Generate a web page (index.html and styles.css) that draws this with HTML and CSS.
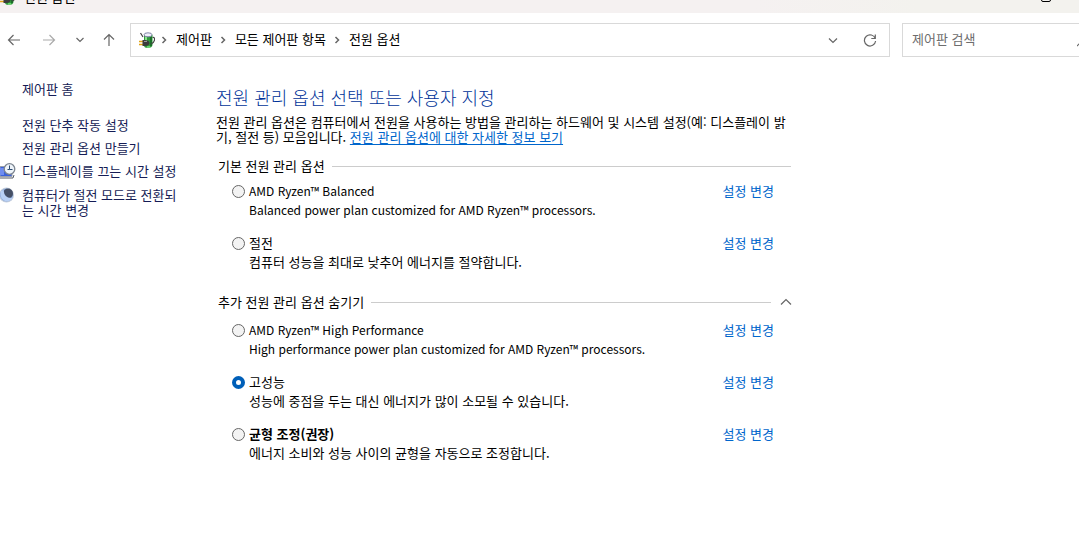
FILE: index.html
```html
<!DOCTYPE html>
<html lang="ko">
  <head>
    <meta charset="UTF-8" />
    <meta name="viewport" content="width=device-width, initial-scale=1.0" />
    <title>전원 옵션</title>
    <link rel="stylesheet" href="styles.css">
  </head>
  <body>
    <svg width="0" height="0" class="sprite" aria-hidden="true">
      <symbol id="power" viewBox="0 0 16 16">
        <path d="M5 4Q5 1 9 1t4.500 2.500v9.500Q13 16 9 16t-4-2.500z" fill="#2f9a3b" />
        <path d="M7 5v4" stroke="#8be08c" stroke-width="2" />
        <path d="M12 5v9" stroke="#166324" stroke-width="1.500" />
        <path d="M8 15h3" stroke="#7be07c" stroke-width="1.500" />
        <ellipse cx="9" cy="2.800" rx="4" ry="2" fill="#f0f0fa" stroke="#8486a8" />
        <path d="M1.500 1l2.500 4M13.500 5.500q2.500-.5 2 2.500t-3.500 4" fill="none" stroke="#444" stroke-width="1.200" />
        <path d="M0 9.500h4M0 12.500h4" stroke="#e0a416" stroke-width="1.600" />
        <path d="M3.500 8h3q4 .5 4 3t-4 3h-3z" fill="#3c3c3c" />
        <path d="M5 9.500h3" stroke="#999" />
      </symbol>
    </svg>
    <header class="titlebar">
      <svg class="icon-power"><use href="#power" /></svg>
      <span class="window-title">전원 옵션</span>
      <button class="maximize" aria-label="최대화"></button>
    </header>

    <nav class="toolbar">
      <button class="nav-btn" aria-label="뒤로">
        <svg width="14" height="14" viewBox="0 0 14 14"><path d="M13 7H1.500M6.500 2L1.500 7l5 5" /></svg>
      </button>
      <button class="nav-btn muted" aria-label="앞으로">
        <svg width="14" height="14" viewBox="0 0 14 14"><path d="M1 7h11.500M7.500 2l5 5-5 5" /></svg>
      </button>
      <button class="nav-btn recent" aria-label="최근 위치">
        <svg width="10" height="10" viewBox="0 0 10 10"><path d="M1.500 3L5 6.500 8.500 3" /></svg>
      </button>
      <button class="nav-btn up" aria-label="위로">
        <svg width="14" height="14" viewBox="0 0 14 14"><path d="M7 13V1.500M2 6.500l5-5 5 5" /></svg>
      </button>
      <div class="address">
        <svg class="icon-power"><use href="#power" /></svg>
        <svg class="crumb-arrow" viewBox="0 0 6 8"><path d="M1.500 1l3 3-3 3" /></svg>
        <a href="#">제어판</a>
        <svg class="crumb-arrow" viewBox="0 0 6 8"><path d="M1.500 1l3 3-3 3" /></svg>
        <a href="#">모든 제어판 항목</a>
        <svg class="crumb-arrow" viewBox="0 0 6 8"><path d="M1.500 1l3 3-3 3" /></svg>
        <a href="#">전원 옵션</a>
        <button class="nav-btn dropdown" aria-label="이전 위치">
          <svg width="10" height="10" viewBox="0 0 10 10"><path d="M1 3.500l4 4 4-4" /></svg>
        </button>
        <button class="nav-btn refresh" aria-label="새로 고침">
          <svg width="14" height="14" viewBox="0 0 14 14"><path d="M12.300 5.500a5.600 5.600 0 1 0 .3 2.500M12.300 1.500v4h-4" /></svg>
        </button>
      </div>
      <div class="search">
        <input type="search" placeholder="제어판 검색" aria-label="제어판 검색" />
        <svg width="2" height="14" viewBox="0 0 2 14"><path d="M0 13l3-3" /></svg>
      </div>
    </nav>

    <div class="layout">
      <aside class="sidebar">
        <a class="home" href="#">제어판 홈</a>
        <ul class="tasks">
          <li><a href="#">전원 단추 작동 설정</a></li>
          <li><a href="#">전원 관리 옵션 만들기</a></li>
          <li>
            <svg class="task-icon" viewBox="0 0 16 16">
              <path d="M0 3.500h12v10H0z" fill="#3a62dc" stroke="#9aa0ad" />
              <path d="M0 5h4v7H0z" fill="#6f8df0" />
              <path d="M0 15h13l1-3" fill="none" stroke="#555b66" />
              <circle cx="9.500" cy="6" r="5.300" fill="#eef4fa" stroke="#7c8590" stroke-width="1.300" />
              <path d="M9.500 2.500V6.500H12.500M7.500 6.500h2" fill="none" stroke="#2c4a70" />
            </svg>
            <a href="#">디스플레이를 끄는 시간 설정</a>
          </li>
          <li>
            <svg class="task-icon" viewBox="0 0 16 16">
              <circle cx="6.500" cy="8" r="7.500" fill="#c3cddc" />
              <circle cx="6.500" cy="8" r="6.500" fill="#8aa9dc" />
              <circle cx="8" cy="6.500" r="5" fill="#465066" />
              <path d="M1 4Q-1 11 5 14q5 1 7.500-3-8 1-9-8z" fill="#b9d0f4" />
            </svg>
            <a href="#">컴퓨터가 절전 모드로 전환되<br />는 시간 변경</a>
          </li>
        </ul>
      </aside>

      <main class="content">
        <h1>전원 관리 옵션 선택 또는 사용자 지정</h1>
        <p class="intro">
          전원 관리 옵션은 컴퓨터에서 전원을 사용하는 방법을 관리하는 하드웨어 및 시스템 설정(예: 디스플레이 밝<br />기, 절전 등) 모음입니다.
          <a href="#">전원 관리 옵션에 대한 자세한 정보 보기</a>
        </p>

        <section>
          <h2>기본 전원 관리 옵션</h2>
          <div class="plan amd">
            <input type="radio" name="plan" id="amd-balanced" />
            <label for="amd-balanced">AMD Ryzen™ Balanced</label>
            <a href="#">설정 변경</a>
            <p>Balanced power plan customized for AMD Ryzen™ processors.</p>
          </div>
          <div class="plan">
            <input type="radio" name="plan" id="saver" />
            <label for="saver">절전</label>
            <a href="#">설정 변경</a>
            <p>컴퓨터 성능을 최대로 낮추어 에너지를 절약합니다.</p>
          </div>
        </section>

        <section class="extra">
          <h2>추가 전원 관리 옵션 숨기기
            <button class="nav-btn collapse" aria-label="숨기기">
              <svg width="12" height="8" viewBox="0 0 12 8"><path d="M1 6.500l5-5 5 5" /></svg>
            </button>
          </h2>
          <div class="plan amd">
            <input type="radio" name="plan" id="amd-high" />
            <label for="amd-high">AMD Ryzen™ High Performance</label>
            <a href="#">설정 변경</a>
            <p>High performance power plan customized for AMD Ryzen™ processors.</p>
          </div>
          <div class="plan">
            <input type="radio" name="plan" id="high" checked />
            <label for="high">고성능</label>
            <a href="#">설정 변경</a>
            <p>성능에 중점을 두는 대신 에너지가 많이 소모될 수 있습니다.</p>
          </div>
          <div class="plan recommended">
            <input type="radio" name="plan" id="balanced" />
            <label for="balanced">균형 조정(권장)</label>
            <a href="#">설정 변경</a>
            <p>에너지 소비와 성능 사이의 균형을 자동으로 조정합니다.</p>
          </div>
        </section>
      </main>
    </div>
  </body>
</html>
```

FILE: styles.css
```css
* {
  box-sizing: border-box;
}

body {
  margin: 0;
  background: #fff;
  color: #000;
  font-family: "Noto Sans CJK KR", sans-serif;
  font-size: 13px;
  line-height: 15px;
  overflow-x: hidden;
}

h1,
h2,
p,
ul {
  margin: 0;
  padding: 0;
  font-weight: normal;
}

a {
  color: #0066cc;
  text-decoration: none;
}

button {
  padding: 0;
  border: 0;
  background: none;
}

svg {
  display: block;
  flex: none;
}

.sprite {
  position: absolute;
}

.icon-power {
  width: 16px;
  height: 16px;
}

/* window title */
.titlebar {
  display: flex;
  align-items: flex-end;
  height: 13px;
  padding: 0 28px 8px 0;
  gap: 8px;
  overflow: hidden;
  background: linear-gradient(90deg, #f5f1f1 70%, #f3f2ee 85%);
}

.window-title {
  padding-bottom: 1px;
}

.maximize {
  width: 10px;
  height: 10px;
  margin: 0 0 3px auto;
  border: 1px solid #000;
  border-radius: 2px;
}

/* navigation */
.toolbar {
  display: flex;
  align-items: center;
  padding: 10px 0 0 7px;
}

.nav-btn {
  display: flex;
  justify-content: center;
  flex: none;
  width: 14px;
}

.nav-btn path,
.crumb-arrow path,
.search path {
  fill: none;
  stroke: #666;
  stroke-width: 1.2;
}

.nav-btn.muted {
  margin-left: 21px;
}

.nav-btn.muted path {
  stroke: #aaa;
}

.nav-btn.recent {
  margin-left: 17px;
}

.nav-btn.up {
  margin: 0 14px 0 15px;
}

.address,
.search {
  display: flex;
  align-items: center;
  height: 34px;
  border: 1px solid #d9d9d9;
}

.address {
  flex: 1;
  padding: 0 12px 0 8px;
}

.address a {
  padding-bottom: 3px;
  color: #000;
}

.crumb-arrow {
  width: 6px;
  height: 8px;
  margin: 0 9px 0 8px;
}

.crumb-arrow path {
  stroke-width: 1.5;
}

.address .icon-power + .crumb-arrow {
  margin-left: 6px;
}

.nav-btn.dropdown {
  margin-left: auto;
}

.nav-btn.refresh {
  margin-left: 23px;
}

.search {
  width: 177px;
  margin-left: 12px;
  border-right: 0;
}

.search input {
  flex: 1;
  min-width: 0;
  padding: 0 0 3px 9px;
  border: 0;
  outline: 0;
  font: inherit;
}

.search input::placeholder {
  color: #6d6d6d;
}

/* page */
.layout {
  display: flex;
  padding-top: 24px;
}

.sidebar {
  flex: none;
  width: 216px;
}

.sidebar a {
  color: #151c55;
}

.home {
  display: block;
  padding-left: 22px;
}

.tasks {
  display: grid;
  gap: 8px;
  margin-top: 21px;
  list-style: none;
}

.tasks li {
  display: flex;
  padding-left: 22px;
}

.task-icon {
  width: 16px;
  height: 16px;
  margin: 0 6px 0 -22px;
}

.content {
  flex: 0 1 575px;
  padding-top: 4px;
}

h1 {
  color: #003399;
  font-size: 18px;
  font-weight: 300;
  line-height: 24px;
}

.intro {
  margin-top: 5px;
  white-space: nowrap;
}

.intro a {
  text-decoration: underline;
  text-underline-offset: 2px;
}

h2 {
  display: flex;
  align-items: center;
  gap: 7px;
  margin: 14px 0 8px 2px;
  font-size: 13px;
  line-height: 15px;
}

h2::after {
  content: "";
  flex: 1;
  height: 1px;
  margin-top: 2px;
  background: #ccc;
}

.collapse {
  order: 1;
  margin-left: 1px;
}

.extra h2 {
  margin: 23px -2px 11px 2px;
}

.plan {
  display: grid;
  grid-template-columns: 17px 1fr auto;
  align-items: center;
  padding: 0 17px 0 16px;
  line-height: 19px;
}

.plan + .plan {
  margin-top: 14px;
}

.plan p {
  grid-column: 2 / 4;
}

/* latin plan names run wider than the hangul ones */
.amd label,
.amd p {
  font-size: 12px;
}

.plan input {
  appearance: none;
  width: 13px;
  height: 13px;
  margin: 2px 0 0;
  border: 1px solid #666;
  border-radius: 50%;
  background: #f3f3f3;
}

.plan input:checked {
  border: 4px solid #005fb8;
  background: #fff;
}

.recommended label {
  font-weight: bold;
}
```
